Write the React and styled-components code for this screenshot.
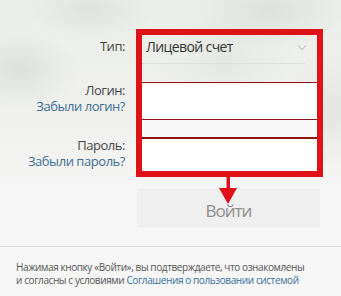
import React from "react"
import styled, { createGlobalStyle } from "styled-components"

const GlobalStyle = createGlobalStyle`
  html, body {
    margin: 0;
    padding: 0;
  }
  body {
    font-family: "Open Sans", "Noto Sans", sans-serif;
    background: #f7f7f7;
  }
`

const Page = styled.div`
  position: relative;
  width: 341px;
  height: 296px;
  overflow: hidden;
  padding-top: 29px;
  box-sizing: border-box;
  background:
    radial-gradient(ellipse 60px 40px at 20px 70px, rgba(214, 218, 212, 0.7), transparent),
    radial-gradient(ellipse 70px 30px at 90px 10px, rgba(220, 224, 218, 0.8), transparent),
    radial-gradient(ellipse 80px 40px at 270px 10px, rgba(218, 222, 216, 0.8), transparent),
    radial-gradient(ellipse 50px 60px at 330px 110px, rgba(222, 225, 220, 0.7), transparent),
    radial-gradient(ellipse 70px 50px at 225px 60px, rgba(226, 229, 224, 0.8), transparent),
    linear-gradient(to bottom, #eceeea 0px, #f0f1ee 120px, #f6f6f6 190px, #f7f7f7 296px);
`

const Form = styled.div`
  display: flex;
`

const LabelColumn = styled.div`
  width: 136px;
  padding-right: 11px;
  box-sizing: border-box;
  display: flex;
  flex-direction: column;
  align-items: flex-end;
  text-align: right;
`

const LabelRow = styled.div`
  height: ${({ h }) => h}px;
  padding-top: ${({ top }) => top || 0}px;
  box-sizing: border-box;
  display: flex;
  flex-direction: column;
  align-items: flex-end;
`

const Label = styled.span`
  font-size: 13px;
  line-height: 16px;
  letter-spacing: -0.45px;
  color: #454545;
`

const ForgotLink = styled.a`
  font-size: 13px;
  line-height: 16px;
  letter-spacing: -0.45px;
  color: #3f6e92;
  text-decoration: none;
`

const Frame = styled.div`
  width: 187px;
  border: 6px solid #df1219;
  box-sizing: border-box;
  display: flex;
  flex-direction: column;
`

const TypeSection = styled.div`
  height: 47px;
`

const Select = styled.div`
  height: 29px;
  margin-right: 12px;
  padding: 2px 0 0 4px;
  box-sizing: border-box;
  border-bottom: 1px solid #dcdedb;
  display: flex;
  justify-content: space-between;
  font-size: 14px;
  line-height: 19px;
  letter-spacing: -0.6px;
  color: #333;
`

const Chevron = styled.svg`
  margin-top: 7px;
  margin-right: -2px;
`

const Field = styled.div`
  height: ${({ h }) => h}px;
  border-top: ${({ thick }) => (thick ? 2 : 1)}px solid #8e1515;
  box-sizing: border-box;
  background: ${({ muted }) => (muted ? "#f9f9f9" : "#fff")};
`

const ButtonRow = styled.div`
  padding: 12px 0 0 137px;
`

const LoginButton = styled.button`
  width: 183px;
  height: 38px;
  border: none;
  background: #efefef;
  color: #8d8d8d;
  font-family: "Open Sans", sans-serif;
  font-size: 17px;
  line-height: 24px;
  letter-spacing: -1px;
  padding: 6px 0 0;
  margin: 0;
`

const Divider = styled.hr`
  margin: 19px 0 0;
  border: none;
  border-top: 1px solid #dcdcdc;
  height: 0;
`

const Footer = styled.p`
  margin: 0;
  padding: 14px 0 0 16px;
  white-space: nowrap;
  font-size: 10px;
  line-height: 13px;
  letter-spacing: -0.4px;
  color: #555;
`

const FooterLink = styled.a`
  color: #3a7099;
  text-decoration: none;
`

const Arrow = styled.svg`
  position: absolute;
  left: 218px;
  top: 176px;
`

export default function App() {
  return (
    <Page>
      <GlobalStyle />
      <Form>
        <LabelColumn>
          <LabelRow h={53} top={9}>
            <Label>Тип:</Label>
          </LabelRow>
          <LabelRow h={55}>
            <Label>Логин:</Label>
            <ForgotLink href="#">Забыли логин?</ForgotLink>
          </LabelRow>
          <LabelRow h={40}>
            <Label>Пароль:</Label>
            <ForgotLink href="#">Забыли пароль?</ForgotLink>
          </LabelRow>
        </LabelColumn>
        <Frame>
          <TypeSection>
            <Select>
              <span>Лицевой счет</span>
              <Chevron width="10" height="7" viewBox="0 0 10 7">
                <path d="M1 1.5 L5 5.5 L9 1.5" fill="none" stroke="#c9cbc8" strokeWidth="1.3" />
              </Chevron>
            </Select>
          </TypeSection>
          <Field h={37} />
          <Field h={18} muted />
          <Field h={34} thick />
        </Frame>
      </Form>
      <ButtonRow>
        <LoginButton>Войти</LoginButton>
      </ButtonRow>
      <Divider />
      <Footer>
        Нажимая кнопку «Войти», вы подтверждаете, что ознакомлены
        <br />
        и согласны с условиями <FooterLink href="#">Соглашения о пользовании системой</FooterLink>
      </Footer>
      <Arrow width="20" height="30" viewBox="0 0 20 30">
        <rect x="8.5" y="0" width="3.5" height="14" fill="#df1219" />
        <polygon points="1,12 19,12 10,28" fill="#df1219" />
      </Arrow>
    </Page>
  )
}
